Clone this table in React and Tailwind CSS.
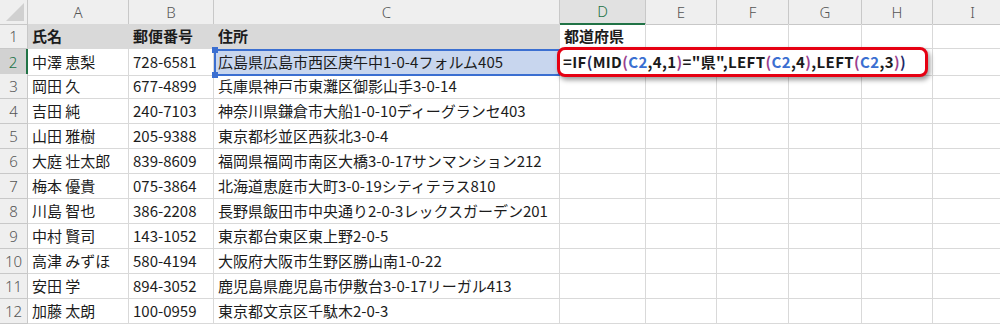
const cols = ["A", "B", "C", "D", "E", "F", "G", "H", "I"];

const rows = [
  ["氏名", "郵便番号", "住所", "都道府県"],
  ["中澤 恵梨", "728-6581", "広島県広島市西区庚午中1-0-4フォルム405"],
  ["岡田 久", "677-4899", "兵庫県神戸市東灘区御影山手3-0-14"],
  ["吉田 純", "240-7103", "神奈川県鎌倉市大船1-0-10ディーグランセ403"],
  ["山田 雅樹", "205-9388", "東京都杉並区西荻北3-0-4"],
  ["大庭 壮太郎", "839-8609", "福岡県福岡市南区大橋3-0-17サンマンション212"],
  ["梅本 優貴", "075-3864", "北海道恵庭市大町3-0-19シティテラス810"],
  ["川島 智也", "386-2208", "長野県飯田市中央通り2-0-3レックスガーデン201"],
  ["中村 賢司", "143-1052", "東京都台東区東上野2-0-5"],
  ["高津 みずほ", "580-4194", "大阪府大阪市生野区勝山南1-0-22"],
  ["安田 学", "894-3052", "鹿児島県鹿児島市伊敷台3-0-17リーガル413"],
  ["加藤 太朗", "100-0959", "東京都文京区千駄木2-0-3"],
];

const grid =
  "grid grid-cols-[28px_101px_85px_346px_86px_71px_72px_73px_71px_80px]";

function Formula() {
  const p = "text-[#9b3f8f]";
  const r = "text-[#3b6fd1]";
  return (
    <span className="font-bold tracking-[0.35px] text-[#1a1a1a]">
      =IF<span className="text-[#1f2a6b]">(</span>MID<span className={p}>(</span>
      <span className={r}>C2</span>,4,1<span className={p}>)</span>="県",LEFT
      <span className={p}>(</span>
      <span className={r}>C2</span>,4<span className={p}>)</span>,LEFT
      <span className={p}>(</span>
      <span className={r}>C2</span>,3<span className={p}>)</span>
      <span className="text-[#1f2a6b]">)</span>
    </span>
  );
}

export default function App() {
  return (
    <div className="h-[325px] w-[1000px] overflow-hidden bg-white text-[15px] text-[#1c1c1c] [font-family:'Noto_Sans_CJK_JP','Noto_Sans',sans-serif]">
      {/* column header */}
      <div className={`${grid} h-[24px]`}>
        <div className="relative border-r border-b border-[#c8c8c8] bg-[#efefef]">
          <svg className="absolute right-[3px] bottom-[3px]" width="18" height="18">
            <polygon points="18,0 18,18 0,18" fill="#d0d0d0" />
          </svg>
        </div>
        {cols.map((c) => (
          <div
            key={c}
            className={
              c === "D"
                ? "flex items-center justify-center border-r border-b-2 border-r-[#c8c8c8] border-b-[#217346] bg-[#e1e1e1] text-[#217346]"
                : "flex items-center justify-center border-r border-b border-[#c8c8c8] bg-[#efefef] text-[#555]"
            }
          >
            <span className="[font-family:'Noto_Sans',sans-serif] text-[15px] font-light">{c}</span>
          </div>
        ))}
      </div>

      {rows.map((row, i) => {
        const n = i + 1;
        return (
          <div key={n} className={`${grid} h-[25px]`}>
            <div
              className={
                n === 2
                  ? "flex items-center justify-center border-r-2 border-b border-r-[#217346] border-b-[#c8c8c8] bg-[#d2d2d2] text-[#217346]"
                  : "flex items-center justify-center border-r border-b border-[#c8c8c8] bg-[#efefef] text-[#555]"
              }
            >
              <span className="[font-family:'Noto_Sans',sans-serif] font-light">{n}</span>
            </div>
            {cols.map((c, j) => {
              const txt = row[j];
              if (n === 2 && c === "C") {
                return (
                  <div
                    key={c}
                    className="relative flex items-center border-2 border-[#3b6fd1] bg-[#c8d6ee] pl-[2px] whitespace-nowrap"
                  >
                    {txt}
                    <div className="absolute -top-[4px] -left-[4px] h-[6px] w-[6px] bg-[#3b6fd1]" />
                    <div className="absolute -bottom-[4px] -left-[4px] h-[6px] w-[6px] bg-[#3b6fd1]" />
                  </div>
                );
              }
              if (n === 2 && c === "D") {
                return (
                  <div key={c} className="relative border-r border-b border-[#d9d9d9]">
                    <div className="absolute top-[-2px] left-[-3px] z-10 flex h-[30px] w-[371px] items-center rounded-[8px] border-[3px] border-[#e60012] bg-white pl-[3px] whitespace-nowrap shadow-[2px_3px_5px_rgba(0,0,0,0.4)]">
                      <Formula />
                    </div>
                  </div>
                );
              }
              const head = n === 1 && j < 3;
              return (
                <div
                  key={c}
                  className={`flex items-center border-r border-b border-[#d9d9d9] pl-[4px] whitespace-nowrap ${
                    head ? "bg-[#d9d9d9] font-bold" : ""
                  } ${n === 1 && c === "D" ? "font-bold" : ""}`}
                >
                  {txt}
                </div>
              );
            })}
          </div>
        );
      })}
    </div>
  );
}
